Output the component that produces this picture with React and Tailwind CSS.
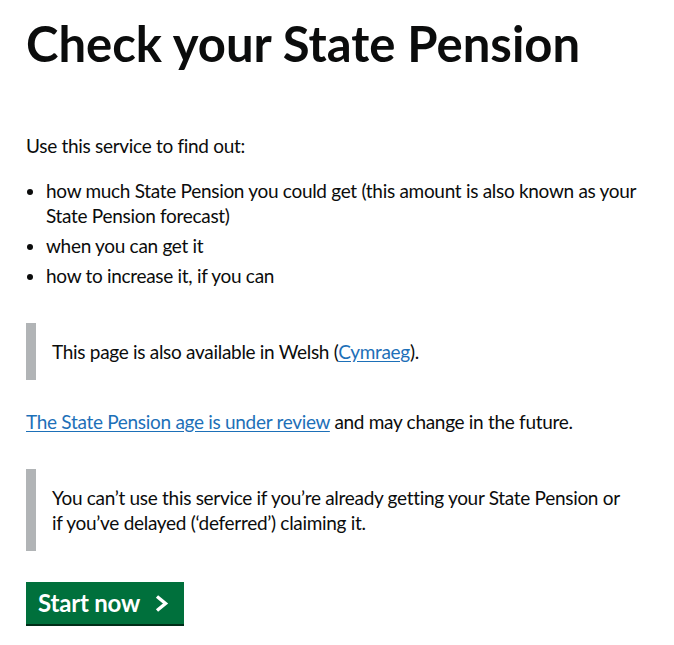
export default function App() {
  return (
    <div className="min-h-screen bg-white text-[#0b0c0c] px-[26px] pt-[18px] tracking-[-0.3px]" style={{ fontFamily: 'Lato, "Liberation Sans", sans-serif' }}>
      <h1 className="text-[49px] leading-[50px] font-bold tracking-[0px] mb-[65px]">Check your State Pension</h1>
      <p className="text-[19px] leading-[25px] mb-[20px]">Use this service to find out:</p>
      <ul className="text-[19px] leading-[25px] list-disc pl-[20px] mb-[35px]">
        <li className="mb-[5px]">how much State Pension you could get (this amount is also known as your State Pension forecast)</li>
        <li className="mb-[5px]">when you can get it</li>
        <li className="mb-[5px]">how to increase it, if you can</li>
      </ul>
      <div className="border-l-[10px] border-[#b1b4b6] pl-[16px] py-[16px] text-[19px] leading-[25px] mb-[29px]">
        This page is also available in Welsh (<a href="#" className="text-[#1d70b8] underline underline-offset-[2px]">Cymraeg</a>).
      </div>
      <p className="text-[19px] leading-[25px] mb-[35px]">
        <a href="#" className="text-[#1d70b8] underline underline-offset-[2px]">The State Pension age is under review</a> and may change in the future.
      </p>
      <div className="border-l-[10px] border-[#b1b4b6] pl-[16px] py-[16px] pr-[20px] text-[19px] leading-[25px] mb-[31px] max-w-[630px]">
        You can’t use this service if you’re already getting your State Pension or if you’ve delayed (‘deferred’) claiming it.
      </div>
      <button className="flex items-center gap-[14px] bg-[#00703c] text-white font-bold text-[24px] leading-[24px] h-[42px] pl-[12px] pr-[15px] tracking-[-0.2px] shadow-[0_2px_0_#002d18]">
        <span>Start now</span>
        <svg width="15" height="17" viewBox="0 0 15 17" fill="none">
          <path d="M3 1.5 L11.5 8.5 L3 15.5" stroke="white" strokeWidth="3.4" strokeLinejoin="miter" />
        </svg>
      </button>
    </div>
  );
}
